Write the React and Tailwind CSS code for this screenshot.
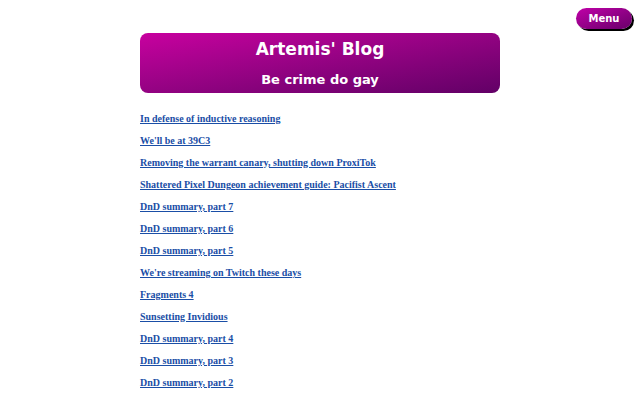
export default function App() {
  const posts = [
    'In defense of inductive reasoning',
    "We'll be at 39C3",
    'Removing the warrant canary, shutting down ProxiTok',
    'Shattered Pixel Dungeon achievement guide: Pacifist Ascent',
    'DnD summary, part 7',
    'DnD summary, part 6',
    'DnD summary, part 5',
    "We're streaming on Twitch these days",
    'Fragments 4',
    'Sunsetting Invidious',
    'DnD summary, part 4',
    'DnD summary, part 3',
    'DnD summary, part 2',
  ]

  return (
    <div className="relative min-h-screen bg-white">
      <button className="absolute top-[8px] right-[8px] h-[21px] w-[56px] rounded-full bg-gradient-to-br from-[#c000a8] to-[#6a006a] text-white text-[10px] font-bold shadow-[2px_2px_0_#000] font-['DejaVu_Sans',sans-serif]">
        Menu
      </button>

      <div className="w-[360px] mx-auto pt-[33px]">
        <header className="h-[60px] rounded-[8px] bg-gradient-to-br from-[#c8009f] to-[#620066] text-white text-center font-bold font-['DejaVu_Sans',sans-serif] flex flex-col items-center">
          <h1 className="text-[17px] leading-none mt-[8px]">Artemis' Blog</h1>
          <p className="text-[13px] leading-none mt-[15px]">Be crime do gay</p>
        </header>

        <ul className="mt-[19px] flex flex-col gap-[8px] text-[10px] leading-[14px] font-['Liberation_Serif',serif]">
          {posts.map((p, i) => (
            <li key={i}>
              <a href="#" className="font-bold text-[#1a4ea6] underline">{p}</a>
            </li>
          ))}
        </ul>
      </div>
    </div>
  )
}
